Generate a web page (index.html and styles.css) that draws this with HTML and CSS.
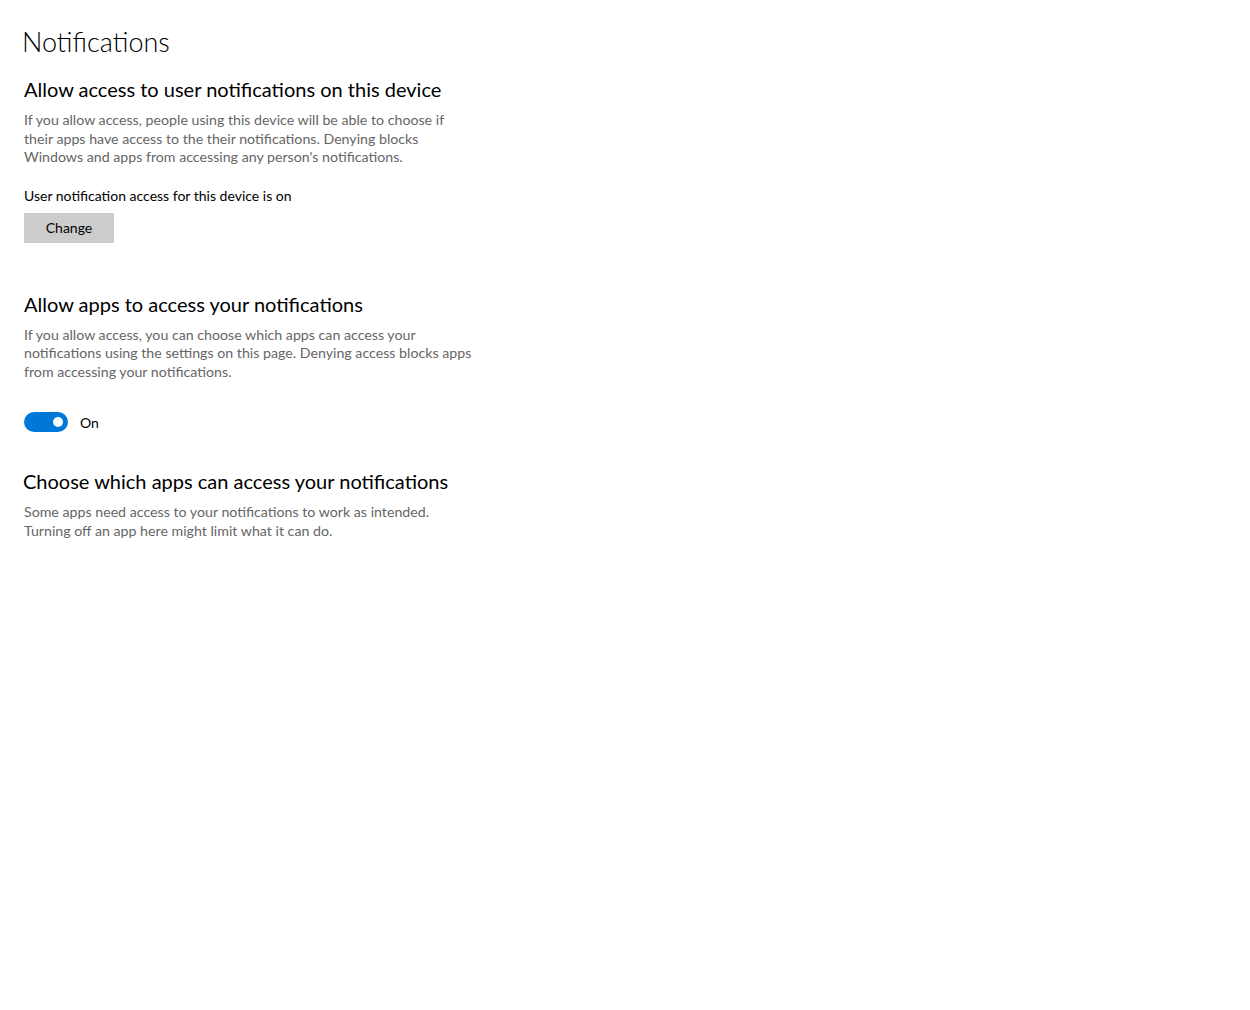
FILE: index.html
```html
<!DOCTYPE html>
<html>
<head>
<meta charset="utf-8">
<link rel="stylesheet" href="styles.css">
</head>
<body>
<main class="page">
  <h1 class="title">Notifications</h1>

  <section class="section first">
    <h2 class="heading">Allow access to user notifications on this device</h2>
    <p class="desc">If you allow access, people using this device will be able to choose if<br>their apps have access to the their notifications. Denying blocks<br>Windows and apps from accessing any person's notifications.</p>
    <p class="status">User notification access for this device is on</p>
    <button class="btn">Change</button>
  </section>

  <section class="section second">
    <h2 class="heading">Allow apps to access your notifications</h2>
    <p class="desc">If you allow access, you can choose which apps can access your<br>notifications using the settings on this page. Denying access blocks apps<br>from accessing your notifications.</p>
    <div class="toggle-row">
      <span class="toggle"><span class="knob"></span></span>
      <span class="toggle-label">On</span>
    </div>
  </section>

  <section class="section third">
    <h2 class="heading">Choose which apps can access your notifications</h2>
    <p class="desc">Some apps need access to your notifications to work as intended.<br>Turning off an app here might limit what it can do.</p>
  </section>
</main>
</body>
</html>
```

FILE: styles.css
```css
html, body {
  margin: 0;
  padding: 0;
  background: #ffffff;
}
body {
  font-family: Lato, "Open Sans", sans-serif;
  color: #000000;
}
.page {
  padding: 22px 0 0 24px;
}
.title {
  margin: 0 0 0 -2px;
  font-size: 27px;
  font-weight: 300;
  line-height: 40px;
}
.section {
  display: flex;
  flex-direction: column;
  align-items: flex-start;
}
.first { margin-top: 13px; }
.second { margin-top: 47px; }
.third { margin-top: 35px; }
.heading {
  margin: 0;
  font-size: 20px;
  font-weight: 400;
  line-height: 28px;
}
.third .heading { margin-left: -1px; }
.desc {
  margin: 8px 0 0 0;
  font-size: 14.2px;
  line-height: 18.5px;
  color: #666666;
}
.status {
  margin: 19px 0 0 0;
  font-size: 14px;
  line-height: 20px;
}
.btn {
  margin-top: 7px;
  width: 90px;
  height: 30px;
  border: none;
  background: #cccccc;
  font-family: inherit;
  font-size: 14px;
  color: #000;
  padding: 0;
}
.toggle-row {
  margin-top: 31px;
  display: flex;
  align-items: center;
  gap: 12px;
}
.toggle {
  width: 44px;
  height: 20px;
  border-radius: 10px;
  background: #0078d7;
  display: flex;
  align-items: center;
  justify-content: flex-end;
  padding-right: 5px;
  box-sizing: border-box;
}
.knob {
  width: 10px;
  height: 10px;
  border-radius: 50%;
  background: #ffffff;
}
.toggle-label {
  font-size: 14px;
}
```
